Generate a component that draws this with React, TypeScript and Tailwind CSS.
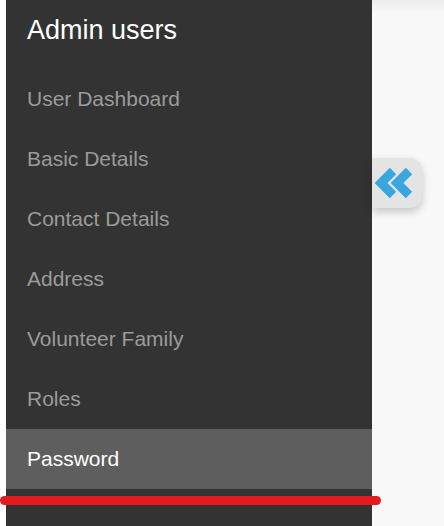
import { useState } from "react";

const menu = [
  "User Dashboard",
  "Basic Details",
  "Contact Details",
  "Address",
  "Volunteer Family",
  "Roles",
  "Password",
];

export default function App() {
  const [active, setActive] = useState("Password");

  return (
    <div
      className="relative flex h-[526px] w-[444px] overflow-hidden bg-white"
      style={{ fontFamily: '"Liberation Sans", Arial, sans-serif' }}
    >
      <div className="ml-[6px] flex w-[366px] flex-col bg-[#333333]">
        <h2 className="flex h-[69px] items-center pl-[21px] pb-[8px] text-[27px] text-white">
          Admin users
        </h2>
        <ul className="flex flex-col">
          {menu.map((item) => (
            <li key={item}>
              <button
                onClick={() => setActive(item)}
                className={
                  "flex h-[60px] w-full items-center pl-[21px] text-left text-[21px] " +
                  (active === item
                    ? "bg-[#5e5e5e] text-white"
                    : "text-[#9b9b9b]")
                }
              >
                {item}
              </button>
            </li>
          ))}
        </ul>
      </div>

      <div className="flex flex-1 flex-col bg-[#f8f8f8]">
        <div className="h-[12px] bg-gradient-to-b from-[#ececec] to-[#f8f8f8]" />
        <div className="mt-[146px]">
          <button className="flex h-[50px] w-[50px] items-center rounded-r-[12px] bg-[#e4e4e4] shadow-[0_4px_8px_rgba(0,0,0,0.2)]">
            <svg width="44" height="34" viewBox="0 0 44 34">
              <path
                d="M21 5 L9 17 L21 29 M37 5 L25 17 L37 29"
                fill="none"
                stroke="#3aa6df"
                strokeWidth="9"
                strokeLinejoin="miter"
              />
            </svg>
          </button>
        </div>
      </div>

      <div className="absolute left-0 top-[496px] h-[9px] w-[381px] rounded-full bg-[#e31b1e]" />
    </div>
  );
}
